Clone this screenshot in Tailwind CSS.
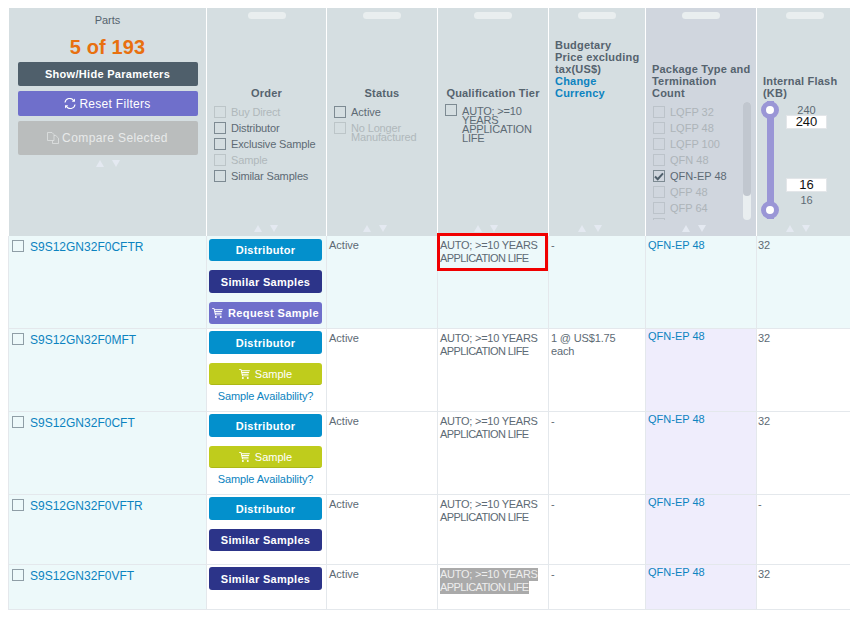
<!DOCTYPE html>
<html lang="en">
<head>
    <meta charset="UTF-8">
    <title>Parts</title>
    <script src="https://cdn.jsdelivr.net/npm/@tailwindcss/browser@4"></script>
</head>
<body class="bg-white overflow-hidden font-['Liberation_Sans',Arial,sans-serif] text-[11px] text-[#5d6a74]">
    <svg class="hidden">
        <symbol id="cart" viewBox="0 0 12 11"><path fill="currentColor" d="M0 0h2.400l.4 1.400H12l-.5 1.100H3.100l.2.900h8l-.4 1H3.600l.2.900h6.800l-.3 1H4l.2.800h6.300v.9H3.300L1.700.900H0zM4.200 8.800a1.100 1.100 0 1 1 0 2.200 1.100 1.100 0 0 1 0-2.200zm5.400 0a1.100 1.100 0 1 1 0 2.200 1.100 1.100 0 0 1 0-2.200z"/></symbol>
    </svg>

    <div class="w-[850px] h-[622px] pt-2 pl-2 overflow-hidden">
        <!-- header -->
        <div class="grid grid-cols-[199px_120px_111px_111px_97px_111px_94px] w-[843px] h-[228px]">
            <div class="relative bg-[#d5dee1] mr-px ml-px pt-[6px] flex flex-col items-center">
                <div class="text-[11px] leading-[13px] text-[#55636e]">Parts</div>
                <div class="mt-[8px] text-[20px] leading-[24px] font-bold tracking-[0.1px] text-[#e8700f]">5 of 193</div>
                <div class="mt-[3px] w-[180px] h-6 rounded-[2px] bg-[#4f5f6b] text-white font-bold text-[11px] tracking-[0.3px] flex items-center justify-center">Show/Hide Parameters</div>
                <div class="mt-[5px] w-[180px] h-[25px] rounded-[2px] bg-[#6f6fcb] text-white text-[12px] tracking-[0.3px] flex items-center justify-center gap-[3px]">
                    <svg width="12" height="11" viewBox="0 0 12 11" fill="none" stroke="white" stroke-width="1.100"><path d="M1 4.500A4.700 4.700 0 0 1 9.600 2.600M11 6.500A4.700 4.700 0 0 1 2.400 8.400"/><path fill="white" stroke="none" d="M11 .6v3.200H7.800zM1 10.400V7.200h3.200z"/></svg>
                    Reset Filters
                </div>
                <div class="mt-[5px] w-[180px] h-[34px] rounded-[2px] bg-[#babdbd] text-[#e8eaea] text-[12px] tracking-[0.4px] flex items-center justify-center gap-[3px]">
                    <svg width="12" height="12" viewBox="0 0 12 12" fill="none" stroke="#dfe2e2" stroke-width="0.800"><path d="M.5.500h4.500l2 2v6h-6.500zM7 3.500h1.800l2.700 2.700v5.300H5.500V8.500"/></svg>
                    Compare Selected
                </div>
                <div class="mt-[5px] flex gap-[8px]"><i class="w-0 h-0 border-x-[4px] border-x-transparent border-b-[7px] border-b-[#e4e9f1]"></i><i class="w-0 h-0 border-x-[4px] border-x-transparent border-t-[7px] border-t-[#e4e9f1]"></i></div>
            </div>

            <div class="relative bg-[#d5dee1] mr-px">
                <div class="absolute top-1 left-[41px] w-[38px] h-[7px] rounded-full bg-[#e9eeef]"></div>
                <div class="h-[91px] flex items-end justify-center font-bold tracking-[0.2px] text-[#55636e] leading-[12px]">Order</div>
                <div class="mt-[5px] pl-[7px] leading-[16px] tracking-[-0.15px]">
                    <label class="flex items-center h-4 text-[#b0b8bb] gap-[5px]"><i class="w-3 h-3 border border-[#bcc5c8]"></i>Buy Direct</label>
                    <label class="flex items-center h-4 gap-[5px]"><i class="w-3 h-3 border border-[#7d8a92]"></i>Distributor</label>
                    <label class="flex items-center h-4 gap-[5px]"><i class="w-3 h-3 border border-[#7d8a92]"></i>Exclusive Sample</label>
                    <label class="flex items-center h-4 text-[#b0b8bb] gap-[5px]"><i class="w-3 h-3 border border-[#bcc5c8]"></i>Sample</label>
                    <label class="flex items-center h-4 gap-[5px]"><i class="w-3 h-3 border border-[#7d8a92]"></i>Similar Samples</label>
                </div>
                <div class="absolute bottom-1 left-[47px] flex gap-[8px]"><i class="w-0 h-0 border-x-[4px] border-x-transparent border-b-[7px] border-b-[#e4e9f1]"></i><i class="w-0 h-0 border-x-[4px] border-x-transparent border-t-[7px] border-t-[#e4e9f1]"></i></div>
            </div>

            <div class="relative bg-[#d5dee1] mr-px">
                <div class="absolute top-1 left-[36px] w-[38px] h-[7px] rounded-full bg-[#e9eeef]"></div>
                <div class="h-[91px] flex items-end justify-center font-bold tracking-[0.2px] text-[#55636e] leading-[12px]">Status</div>
                <div class="mt-[5px] pl-[7px]">
                    <label class="flex items-center h-4 gap-[5px]"><i class="w-3 h-3 border border-[#7d8a92]"></i>Active</label>
                    <label class="flex items-start gap-[5px] text-[#b0b8bb] leading-[9px] mt-[2px]"><i class="w-3 h-3 shrink-0 border border-[#bcc5c8]"></i><span class="pt-[2px] tracking-[-0.15px]">No Longer<br>Manufactured</span></label>
                </div>
                <div class="absolute bottom-1 left-[36px] flex gap-[8px]"><i class="w-0 h-0 border-x-[4px] border-x-transparent border-b-[7px] border-b-[#e4e9f1]"></i><i class="w-0 h-0 border-x-[4px] border-x-transparent border-t-[7px] border-t-[#e4e9f1]"></i></div>
            </div>

            <div class="relative bg-[#d5dee1] mr-px">
                <div class="absolute top-1 left-[36px] w-[38px] h-[7px] rounded-full bg-[#e9eeef]"></div>
                <div class="h-[91px] flex items-end justify-center font-bold tracking-[0.2px] text-[#55636e] leading-[12px]">Qualification Tier</div>
                <div class="mt-[5px] pl-[7px]">
                    <label class="flex items-start gap-[5px] leading-[9px]"><i class="w-3 h-3 shrink-0 border border-[#7d8a92]"></i><span class="pt-[3px] w-[72px] tracking-[-0.2px]">AUTO; &gt;=10 YEARS APPLICATION LIFE</span></label>
                </div>
                <div class="absolute bottom-1 left-[36px] flex gap-[8px]"><i class="w-0 h-0 border-x-[4px] border-x-transparent border-b-[7px] border-b-[#e4e9f1]"></i><i class="w-0 h-0 border-x-[4px] border-x-transparent border-t-[7px] border-t-[#e4e9f1]"></i></div>
            </div>

            <div class="relative bg-[#d5dee1] mr-px">
                <div class="absolute top-1 left-[29px] w-[38px] h-[7px] rounded-full bg-[#e9eeef]"></div>
                <div class="h-[91px] flex items-end pl-[6px] font-bold tracking-[0.2px] text-[#55636e] leading-[12px]"><div>Budgetary<br>Price excluding<br>tax(US$)<br><span class="text-[#0c83c0]">Change<br>Currency</span></div></div>
                <div class="absolute bottom-1 left-[29px] flex gap-[8px]"><i class="w-0 h-0 border-x-[4px] border-x-transparent border-b-[7px] border-b-[#e4e9f1]"></i><i class="w-0 h-0 border-x-[4px] border-x-transparent border-t-[7px] border-t-[#e4e9f1]"></i></div>
            </div>

            <div class="relative bg-[#d0d6de] mr-px">
                <div class="absolute top-1 left-[36px] w-[38px] h-[7px] rounded-full bg-[#e9eeef]"></div>
                <div class="h-[91px] flex items-end pl-[6px] font-bold tracking-[0.2px] text-[#55636e] leading-[12px]"><div>Package Type and<br>Termination<br>Count</div></div>
                <div class="relative mt-[3px] h-[118px] overflow-hidden pl-[7px] pt-[2px] text-[#adb4b9]">
                    <label class="flex items-center h-4 gap-[5px]"><i class="w-3 h-3 border border-[#bcc3ca]"></i>LQFP 32</label>
                    <label class="flex items-center h-4 gap-[5px]"><i class="w-3 h-3 border border-[#bcc3ca]"></i>LQFP 48</label>
                    <label class="flex items-center h-4 gap-[5px]"><i class="w-3 h-3 border border-[#bcc3ca]"></i>LQFP 100</label>
                    <label class="flex items-center h-4 gap-[5px]"><i class="w-3 h-3 border border-[#bcc3ca]"></i>QFN 48</label>
                    <label class="flex items-center h-4 gap-[5px] text-[#5d6a74]"><i class="w-3 h-3 border border-[#7d8a92] flex items-center justify-center"><svg width="10" height="9" viewBox="0 0 10 9" fill="none" stroke="#4f5f6b" stroke-width="2"><path d="M1 4.500l2.700 2.700L9 1.300"/></svg></i>QFN-EP 48</label>
                    <label class="flex items-center h-4 gap-[5px]"><i class="w-3 h-3 border border-[#bcc3ca]"></i>QFP 48</label>
                    <label class="flex items-center h-4 gap-[5px]"><i class="w-3 h-3 border border-[#bcc3ca]"></i>QFP 64</label>
                    <label class="flex items-center h-4 gap-[5px]"><i class="w-3 h-3 border border-[#bcc3ca]"></i></label>
                    <div class="absolute top-0 left-[97px] w-2 h-[118px] rounded-full bg-[#e9eef0]"><div class="w-2 h-[94px] rounded-full bg-[#c1c7cf]"></div></div>
                </div>
                <div class="absolute bottom-1 left-[36px] flex gap-[8px]"><i class="w-0 h-0 border-x-[4px] border-x-transparent border-b-[7px] border-b-[#e4e9f1]"></i><i class="w-0 h-0 border-x-[4px] border-x-transparent border-t-[7px] border-t-[#e4e9f1]"></i></div>
            </div>

            <div class="relative bg-[#d5dee1]">
                <div class="absolute top-1 left-[29px] w-[38px] h-[7px] rounded-full bg-[#e9eeef]"></div>
                <div class="h-[91px] flex items-end pl-[6px] font-bold tracking-[0.2px] text-[#55636e] leading-[12px]"><div>Internal Flash<br>(KB)</div></div>
                <div class="flex pl-[4px] mt-[2px]">
                    <div class="relative w-[18px] h-[118px] flex justify-center">
                        <div class="w-[7px] h-full bg-[#9a96d6]"></div>
                        <div class="absolute top-0 left-0 w-[18px] h-[18px] rounded-full border-[5px] border-[#9a96d6] bg-white"></div>
                        <div class="absolute bottom-0 left-0 w-[18px] h-[18px] rounded-full border-[5px] border-[#9a96d6] bg-white"></div>
                    </div>
                    <div class="ml-[7px] w-[41px] flex flex-col items-center text-center pt-[3px]">
                        <div class="leading-[12px]">240</div>
                        <div class="-mt-px w-[41px] h-[14px] bg-white border border-[#e3e6e9] text-[13px] leading-[12px] text-[#111]">240</div>
                        <div class="mt-[49px] w-[41px] h-[14px] bg-white border border-[#e3e6e9] text-[13px] leading-[12px] text-[#111]">16</div>
                        <div class="leading-[16px]">16</div>
                    </div>
                </div>
                <div class="absolute bottom-1 left-[29px] flex gap-[8px]"><i class="w-0 h-0 border-x-[4px] border-x-transparent border-b-[7px] border-b-[#e4e9f1]"></i><i class="w-0 h-0 border-x-[4px] border-x-transparent border-t-[7px] border-t-[#e4e9f1]"></i></div>
            </div>
        </div>

        <!-- row 1 -->
        <div class="grid grid-cols-[199px_120px_111px_111px_97px_111px_94px] w-[843px] h-[93px] border-b border-[#e4e8ec] bg-[#edf9fa]">
            <div class="flex items-start gap-[6px] pl-[3px] pt-[4px] border-r border-l border-[#e4e8ec]"><i class="w-3 h-3 border border-[#8f9ea6] shrink-0"></i><a class="text-[12px] leading-[14px] text-[#0c83c0]">S9S12GN32F0CFTR</a></div>
            <div class="flex flex-col items-start gap-[9px] pl-[2px] pt-[3px] border-r border-[#e4e8ec]">
                <div class="w-[113px] h-[22px] rounded-[3px] bg-[#0390cc] text-white font-bold tracking-[0.3px] flex items-center justify-center">Distributor</div>
                <div class="w-[113px] h-[23px] pt-px rounded-[3px] bg-[#2c3489] text-white font-bold tracking-[0.3px] flex items-center justify-center">Similar Samples</div>
                <div class="w-[113px] h-[22px] rounded-[3px] bg-[#6f6fcb] text-white font-bold tracking-[0.4px] flex items-center justify-center gap-[5px]"><svg class="w-[11px] h-[10px] text-white"><use href="#cart"/></svg>Request Sample</div>
            </div>
            <div class="pl-[2px] pt-[3px] leading-[13px] border-r border-[#e4e8ec]">Active</div>
            <div class="relative pl-[2px] pt-[3px] leading-[13px] border-r border-[#e4e8ec]"><span class="block tracking-[-0.25px]">AUTO; &gt;=10 YEARS</span><span class="block tracking-[-0.6px]">APPLICATION LIFE</span><div class="absolute -top-[3px] -left-px w-[111px] h-[38px] border-[3px] border-[#f00000]"></div></div>
            <div class="pl-[2px] pt-[3px] leading-[13px] border-r border-[#e4e8ec]">-</div>
            <div class="pl-[2px] pt-[3px] leading-[13px] border-r border-[#e4e8ec] text-[#0c83c0]">QFN-EP 48</div>
            <div class="pl-[1px] pt-[3px] leading-[13px]">32</div>
        </div>

        <!-- row 2 -->
        <div class="grid grid-cols-[199px_120px_111px_111px_97px_111px_94px] w-[843px] h-[83px] border-b border-[#e4e8ec]">
            <div class="flex items-start gap-[6px] pl-[3px] pt-[4px] border-r border-l border-[#e4e8ec] bg-[#edf9fa]"><i class="w-3 h-3 border border-[#8f9ea6] shrink-0"></i><a class="text-[12px] leading-[14px] text-[#0c83c0]">S9S12GN32F0MFT</a></div>
            <div class="flex flex-col items-start gap-[9px] pl-[2px] pt-[2px] border-r border-[#e4e8ec]">
                <div class="w-[113px] h-[23px] pt-px rounded-[3px] bg-[#0390cc] text-white font-bold tracking-[0.3px] flex items-center justify-center">Distributor</div>
                <div class="w-[113px] h-[22px] pt-px rounded-[3px] bg-[#bfcc1c] border-b border-[#acb815] text-white flex items-center justify-center gap-[5px]"><svg class="w-[11px] h-[10px] text-white"><use href="#cart"/></svg>Sample</div>
                <a class="-mt-[4px] w-[113px] text-center tracking-[-0.1px] text-[#0c83c0] leading-[13px]">Sample Availability?</a>
            </div>
            <div class="pl-[2px] pt-[3px] leading-[13px] border-r border-[#e4e8ec]">Active</div>
            <div class="pl-[2px] pt-[3px] leading-[13px] border-r border-[#e4e8ec]"><span class="block tracking-[-0.25px]">AUTO; &gt;=10 YEARS</span><span class="block tracking-[-0.6px]">APPLICATION LIFE</span></div>
            <div class="pl-[2px] pt-[3px] leading-[13px] border-r border-[#e4e8ec] tracking-[-0.15px]">1 @ US$1.75<br>each</div>
            <div class="pl-[2px] pt-[1px] leading-[13px] border-r border-[#e4e8ec] text-[#0c83c0] bg-[#efedfc]">QFN-EP 48</div>
            <div class="pl-[1px] pt-[3px] leading-[13px]">32</div>
        </div>

        <!-- row 3 -->
        <div class="grid grid-cols-[199px_120px_111px_111px_97px_111px_94px] w-[843px] h-[83px] border-b border-[#e4e8ec]">
            <div class="flex items-start gap-[6px] pl-[3px] pt-[4px] border-r border-l border-[#e4e8ec] bg-[#edf9fa]"><i class="w-3 h-3 border border-[#8f9ea6] shrink-0"></i><a class="text-[12px] leading-[14px] text-[#0c83c0]">S9S12GN32F0CFT</a></div>
            <div class="flex flex-col items-start gap-[9px] pl-[2px] pt-[2px] border-r border-[#e4e8ec]">
                <div class="w-[113px] h-[23px] pt-px rounded-[3px] bg-[#0390cc] text-white font-bold tracking-[0.3px] flex items-center justify-center">Distributor</div>
                <div class="w-[113px] h-[22px] pt-px rounded-[3px] bg-[#bfcc1c] border-b border-[#acb815] text-white flex items-center justify-center gap-[5px]"><svg class="w-[11px] h-[10px] text-white"><use href="#cart"/></svg>Sample</div>
                <a class="-mt-[4px] w-[113px] text-center tracking-[-0.1px] text-[#0c83c0] leading-[13px]">Sample Availability?</a>
            </div>
            <div class="pl-[2px] pt-[3px] leading-[13px] border-r border-[#e4e8ec]">Active</div>
            <div class="pl-[2px] pt-[3px] leading-[13px] border-r border-[#e4e8ec]"><span class="block tracking-[-0.25px]">AUTO; &gt;=10 YEARS</span><span class="block tracking-[-0.6px]">APPLICATION LIFE</span></div>
            <div class="pl-[2px] pt-[3px] leading-[13px] border-r border-[#e4e8ec]">-</div>
            <div class="pl-[2px] pt-[1px] leading-[13px] border-r border-[#e4e8ec] text-[#0c83c0] bg-[#efedfc]">QFN-EP 48</div>
            <div class="pl-[1px] pt-[3px] leading-[13px]">32</div>
        </div>

        <!-- row 4 -->
        <div class="grid grid-cols-[199px_120px_111px_111px_97px_111px_94px] w-[843px] h-[70px] border-b border-[#e4e8ec]">
            <div class="flex items-start gap-[6px] pl-[3px] pt-[4px] border-r border-l border-[#e4e8ec] bg-[#edf9fa]"><i class="w-3 h-3 border border-[#8f9ea6] shrink-0"></i><a class="text-[12px] leading-[14px] text-[#0c83c0]">S9S12GN32F0VFTR</a></div>
            <div class="flex flex-col items-start gap-[9px] pl-[2px] pt-[2px] border-r border-[#e4e8ec]">
                <div class="w-[113px] h-[23px] pt-px rounded-[3px] bg-[#0390cc] text-white font-bold tracking-[0.3px] flex items-center justify-center">Distributor</div>
                <div class="w-[113px] h-[22px] rounded-[3px] bg-[#2c3489] text-white font-bold tracking-[0.3px] flex items-center justify-center">Similar Samples</div>
            </div>
            <div class="pl-[2px] pt-[3px] leading-[13px] border-r border-[#e4e8ec]">Active</div>
            <div class="pl-[2px] pt-[3px] leading-[13px] border-r border-[#e4e8ec]"><span class="block tracking-[-0.25px]">AUTO; &gt;=10 YEARS</span><span class="block tracking-[-0.6px]">APPLICATION LIFE</span></div>
            <div class="pl-[2px] pt-[3px] leading-[13px] border-r border-[#e4e8ec]">-</div>
            <div class="pl-[2px] pt-[1px] leading-[13px] border-r border-[#e4e8ec] text-[#0c83c0] bg-[#efedfc]">QFN-EP 48</div>
            <div class="pl-[1px] pt-[3px] leading-[13px]">-</div>
        </div>

        <!-- row 5 -->
        <div class="grid grid-cols-[199px_120px_111px_111px_97px_111px_94px] w-[843px] h-[45px] border-b border-[#e4e8ec]">
            <div class="flex items-start gap-[6px] pl-[3px] pt-[4px] border-r border-l border-[#e4e8ec] bg-[#edf9fa]"><i class="w-3 h-3 border border-[#8f9ea6] shrink-0"></i><a class="text-[12px] leading-[14px] text-[#0c83c0]">S9S12GN32F0VFT</a></div>
            <div class="flex flex-col items-start pl-[2px] pt-[2px] border-r border-[#e4e8ec]">
                <div class="w-[113px] h-[23px] pt-px rounded-[3px] bg-[#2c3489] text-white font-bold tracking-[0.3px] flex items-center justify-center">Similar Samples</div>
            </div>
            <div class="pl-[2px] pt-[3px] leading-[13px] border-r border-[#e4e8ec]">Active</div>
            <div class="pl-[2px] pt-[3px] leading-[13px] border-r border-[#e4e8ec] text-[#eeeeee]"><span class="block w-fit bg-[#aaaaaa] tracking-[-0.25px]">AUTO; &gt;=10 YEARS</span><span class="block w-fit bg-[#aaaaaa] tracking-[-0.6px]">APPLICATION LIFE</span></div>
            <div class="pl-[2px] pt-[3px] leading-[13px] border-r border-[#e4e8ec]">-</div>
            <div class="pl-[2px] pt-[1px] leading-[13px] border-r border-[#e4e8ec] text-[#0c83c0] bg-[#efedfc]">QFN-EP 48</div>
            <div class="pl-[1px] pt-[3px] leading-[13px]">32</div>
        </div>
    </div>
</body>
</html>
